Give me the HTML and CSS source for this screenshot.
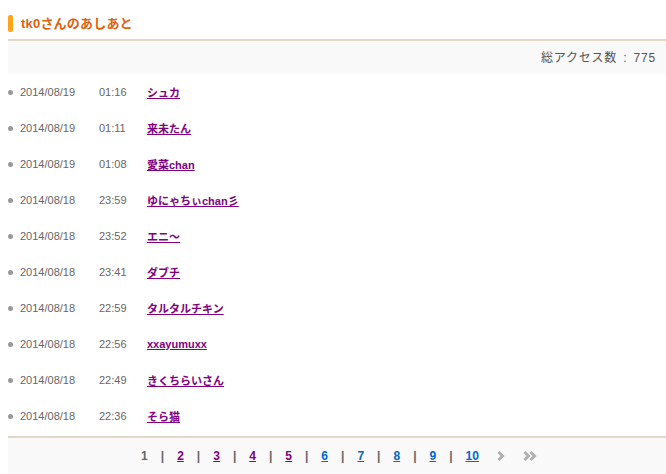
FILE: index.html
```html
<!DOCTYPE html>
<html lang="ja">
<head>
<meta charset="utf-8">
<link rel="stylesheet" href="styles.css">
</head>
<body>
<div class="wrap">
  <h2 class="title"><span class="mark"></span>tk0さんのあしあと</h2>
  <div class="total">総アクセス数 : 775</div>
  <ul class="list">
    <li><span class="date">2014/08/19</span><span class="time">01:16</span><a href="#">シュカ</a></li>
    <li><span class="date">2014/08/19</span><span class="time">01:11</span><a href="#">来未たん</a></li>
    <li><span class="date">2014/08/19</span><span class="time">01:08</span><a href="#">愛菜chan</a></li>
    <li><span class="date">2014/08/18</span><span class="time">23:59</span><a href="#">ゆにゃちぃchan彡</a></li>
    <li><span class="date">2014/08/18</span><span class="time">23:52</span><a href="#">エニ～</a></li>
    <li><span class="date">2014/08/18</span><span class="time">23:41</span><a href="#">ダブチ</a></li>
    <li><span class="date">2014/08/18</span><span class="time">22:59</span><a href="#">タルタルチキン</a></li>
    <li><span class="date">2014/08/18</span><span class="time">22:56</span><a href="#">xxayumuxx</a></li>
    <li><span class="date">2014/08/18</span><span class="time">22:49</span><a href="#">きくちらいさん</a></li>
    <li><span class="date">2014/08/18</span><span class="time">22:36</span><a href="#">そら猫</a></li>
  </ul>
  <div class="pager">
    <span class="cur">1</span><span class="sep">|</span>
    <a class="v" href="#">2</a><span class="sep">|</span>
    <a class="v" href="#">3</a><span class="sep">|</span>
    <a class="v" href="#">4</a><span class="sep">|</span>
    <a class="v" href="#">5</a><span class="sep">|</span>
    <a href="#">6</a><span class="sep">|</span>
    <a href="#">7</a><span class="sep">|</span>
    <a href="#">8</a><span class="sep">|</span>
    <a href="#">9</a><span class="sep">|</span>
    <a href="#">10</a>
    <span class="arrow"><svg width="10" height="10" viewBox="0 0 10 10"><path d="M1.5 1 L5.5 5 L1.5 9" fill="none" stroke="#b0b0b0" stroke-width="3"/></svg></span>
    <span class="arrow2"><svg width="16" height="10" viewBox="0 0 16 10"><path d="M1.5 1 L5.5 5 L1.5 9 M7.5 1 L11.5 5 L7.5 9" fill="none" stroke="#b0b0b0" stroke-width="3"/></svg></span>
  </div>
</div>
</body>
</html>
```
FILE: styles.css
```css
html, body {
  margin: 0;
  padding: 0;
  background: #fff;
}
body {
  font-family: "Liberation Sans", "Noto Sans CJK JP", sans-serif;
  font-size: 11px;
  color: #666;
}
.wrap {
  padding-left: 8px;
}
.title {
  margin: 0;
  padding-top: 15px;
  height: 24px;
  display: flex;
  align-items: flex-start;
  font-size: 13px;
  font-weight: bold;
  color: #e0600e;
  line-height: 17px;
  letter-spacing: 0.2px;
  border-bottom: 2px solid #e2d6c4;
}
.mark {
  display: inline-block;
  width: 5px;
  height: 17px;
  border-radius: 2px;
  background: #ffa31a;
  margin-right: 8px;
}
.total {
  background: #f9f9f9;
  height: 33px;
  line-height: 35px;
  text-align: right;
  padding-right: 10px;
  font-size: 12px;
  letter-spacing: 0.8px;
  word-spacing: 2px;
  color: #555;
}
.list {
  list-style: none;
  margin: 0;
  padding: 0;
}
.list li {
  height: 36px;
  display: flex;
  align-items: center;
}
.list li::before {
  content: "";
  width: 5px;
  height: 5px;
  border-radius: 50%;
  background: #999;
  margin-right: 7px;
}
.date {
  width: 79px;
  color: #666;
}
.time {
  width: 48px;
  color: #666;
}
.list a {
  color: #800080;
  font-weight: bold;
  text-decoration: underline;
}
.pager {
  margin-top: 2px;
  border-top: 2px solid #e2d6c4;
  background: #f9f9f9;
  height: 36px;
  display: flex;
  align-items: center;
  justify-content: center;
  padding-left: 6px;
  font-size: 12px;
  font-weight: bold;
}
.pager a {
  color: #0066cc;
  text-decoration: underline;
}
.pager a.v {
  color: #800080;
}
.pager .cur {
  color: #666;
}
.sep {
  color: #666;
  margin: 0 13px;
}
.arrow {
  margin-left: 18px;
  display: flex;
}
.arrow2 {
  margin-left: 16px;
  display: flex;
}
```
